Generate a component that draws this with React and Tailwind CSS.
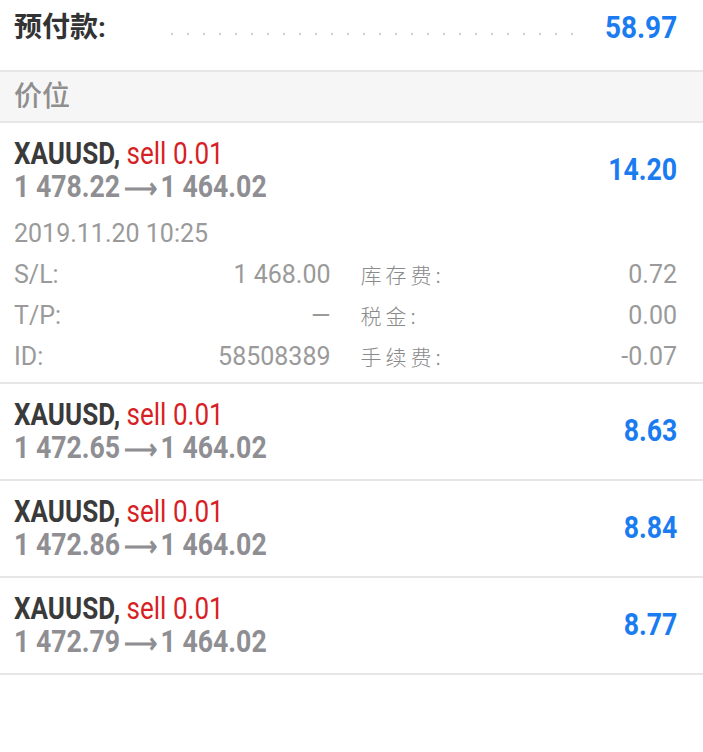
import React from "react";

const trades = [
  { open: "1 478.22", close: "1 464.02", profit: "14.20", expanded: true },
  { open: "1 472.65", close: "1 464.02", profit: "8.63" },
  { open: "1 472.86", close: "1 464.02", profit: "8.84" },
  { open: "1 472.79", close: "1 464.02", profit: "8.77" },
];

const cjk = "font-['Roboto','Noto_Sans_CJK_SC',sans-serif]";

function Detail({ label, value, cn }) {
  return (
    <div className="flex h-[41px] items-center justify-between">
      <span
        className={
          cn
            ? "text-[21px] text-[#8a8a8a] font-['Noto_Sans_CJK_SC',sans-serif] font-light tracking-[4px]"
            : "text-[25px] text-[#9a9a9a]"
        }
      >
        {label}
      </span>
      <span className="text-[25px] text-[#9a9a9a]">{value}</span>
    </div>
  );
}

function Trade({ trade }) {
  return (
    <div
      className={`border-b-2 border-[#e6e6e6] pl-[14px] pr-[26px] ${
        trade.expanded ? "pt-[15px] pb-[5px]" : "py-[15px]"
      }`}
    >
      <div className="flex items-center justify-between">
        <div>
          <div className="h-[32px] leading-[32px] text-[31px] font-bold origin-left scale-x-[0.84] whitespace-nowrap">
            <span className="text-[#3a3a3a]">XAUUSD, </span>
            <span className="text-[#d71f26] font-normal">sell 0.01</span>
          </div>
          <div className="h-[33px] leading-[33px] text-[31px] font-bold text-[#8e8e93] origin-left scale-x-[0.86] whitespace-nowrap">
            {trade.open}
            <span className="mx-[4px] text-[27px]">⟶</span>
            {trade.close}
          </div>
        </div>
        <div className="text-[31px] font-bold text-[#1a7cf0] origin-right scale-x-[0.86]">
          {trade.profit}
        </div>
      </div>
      {trade.expanded && (
        <div className="mt-[10px]">
          <div className="flex h-[41px] items-center text-[25px] text-[#9a9a9a]">
            2019.11.20 10:25
          </div>
          <div className="grid grid-cols-2 gap-x-[30px]">
            <div>
              <Detail label="S/L:" value="1 468.00" />
              <Detail label="T/P:" value="—" />
              <Detail label="ID:" value="58508389" />
            </div>
            <div>
              <Detail label="库存费:" value="0.72" cn />
              <Detail label="税金:" value="0.00" cn />
              <Detail label="手续费:" value="-0.07" cn />
            </div>
          </div>
        </div>
      )}
    </div>
  );
}

export default function App() {
  return (
    <div className={`w-[703px] h-[752px] bg-white ${cjk}`}>
      <div className="flex h-[72px] items-center pl-[14px] pr-[26px] pb-[14px] border-b-2 border-[#e6e6e6]">
        <span className="text-[28px] font-bold text-[#333]">预付款:</span>
        <div className="ml-[58px] mr-[18px] h-[4px] flex-1 translate-y-[6px] bg-[radial-gradient(circle,#cfcfcf_1.2px,transparent_1.6px)] bg-[length:16px_4px]" />
        <span className="text-[31px] font-bold text-[#1a7cf0] origin-right scale-x-[0.9]">
          58.97
        </span>
      </div>
      <div className="flex h-[51px] items-center bg-[#f6f6f6] border-b-2 border-[#e6e6e6] pl-[14px] text-[28px] text-[#8e8e8e] font-medium">
        价位
      </div>
      {trades.map((t, i) => (
        <Trade key={i} trade={t} />
      ))}
    </div>
  );
}
